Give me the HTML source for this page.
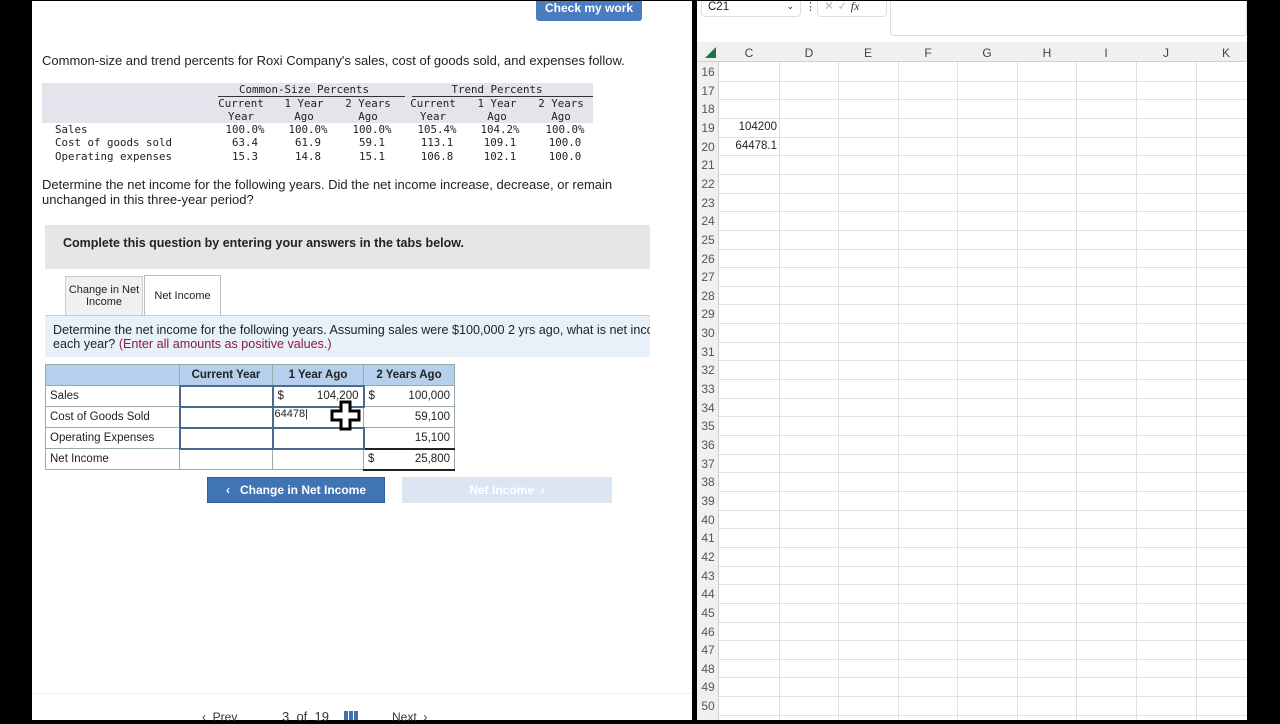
<!DOCTYPE html>
<html><head><meta charset="utf-8"><style>
*{margin:0;padding:0;box-sizing:border-box}
body{width:1280px;height:720px;overflow:hidden;background:#000;position:relative;font-family:"Liberation Sans",Arial,sans-serif;color:#222}
.a{position:absolute}
#left{left:32px;top:0;width:660px;height:720px;background:#fff}
.mono{font-family:"DejaVu Sans Mono","Liberation Mono",monospace;font-size:10.8px;color:#222}
.r{text-align:right}.c{text-align:center}
table.ans{border-collapse:collapse;font-size:11.5px}
table.ans td{border:1px solid #9aa;height:21px;padding:0 4px}
#xl{left:697px;top:0;width:550px;height:720px;background:#fff}
.rh{position:absolute;left:0;width:22px;font-size:12px;color:#555;text-align:center}
.hl{position:absolute;left:22px;right:0;height:1px;background:#e0e0e0}
.vl{position:absolute;top:62px;bottom:0;width:1px;background:#e0e0e0}
.ch{position:absolute;top:46px;font-size:12px;color:#444;text-align:center;width:60px}
</style></head><body>
<div id="left" class="a">
 <div class="a" style="left:504px;top:0;width:106px;height:21px;background:#4a7cc0;border-radius:0 0 3px 3px;color:#fff;font-weight:bold;font-size:12px;text-align:center;line-height:17px">Check my work</div>
 <div class="a" style="left:10px;top:53px;font-size:13px">Common-size and trend percents for Roxi Company's sales, cost of goods sold, and expenses follow.</div>
 <div class="a" style="left:10px;top:83px;width:551px;height:40px;background:#e4e4ec"></div>
 <div class="a mono" style="left:10px;top:83px;width:551px;height:80px;line-height:13.3px">
  <div class="a c" style="left:167px;width:190px;top:0">Common-Size Percents</div>
  <div class="a c" style="left:360px;width:190px;top:0">Trend Percents</div>
  <div class="a" style="left:176px;width:187px;top:13px;height:1px;background:#333"></div>
  <div class="a" style="left:370px;width:181px;top:13px;height:1px;background:#333"></div>
  <div class="a c" style="left:169px;width:60px;top:14px">Current<br>Year</div>
  <div class="a c" style="left:232px;width:60px;top:14px">1 Year<br>Ago</div>
  <div class="a c" style="left:296px;width:60px;top:14px">2 Years<br>Ago</div>
  <div class="a c" style="left:361px;width:60px;top:14px">Current<br>Year</div>
  <div class="a c" style="left:425px;width:60px;top:14px">1 Year<br>Ago</div>
  <div class="a c" style="left:489px;width:60px;top:14px">2 Years<br>Ago</div>
  <div class="a" style="left:13px;top:40px">Sales<br>Cost of goods sold<br>Operating expenses</div>
  <div class="a c" style="left:173px;width:60px;top:40px">100.0%<br>63.4<br>15.3</div>
  <div class="a c" style="left:236px;width:60px;top:40px">100.0%<br>61.9<br>14.8</div>
  <div class="a c" style="left:300px;width:60px;top:40px">100.0%<br>59.1<br>15.1</div>
  <div class="a c" style="left:365px;width:60px;top:40px">105.4%<br>113.1<br>106.8</div>
  <div class="a c" style="left:428px;width:60px;top:40px">104.2%<br>109.1<br>102.1</div>
  <div class="a c" style="left:493px;width:60px;top:40px">100.0%<br>100.0<br>100.0</div>
 </div>
 <div class="a" style="left:10px;top:177px;width:600px;font-size:13px;line-height:15px">Determine the net income for the following years. Did the net income increase, decrease, or remain unchanged in this three-year period?</div>
 <div class="a" style="left:13px;top:225px;width:605px;height:44px;background:#e6e6e6;font-weight:bold;font-size:12.5px;padding:11px 0 0 18px">Complete this question by entering your answers in the tabs below.</div>
 <div class="a c" style="left:33px;top:276px;width:78px;height:39px;background:#f0f0f0;border:1px solid #ccc;border-bottom:none;font-size:11px;line-height:12px;padding-top:7px">Change in Net<br>Income</div>
 <div class="a c" style="left:112px;top:275px;width:77px;height:41px;background:#fff;border:1px solid #bbb;border-bottom:none;font-size:11px;padding-top:14px">Net Income</div>
 <div class="a" style="left:13px;top:315px;width:605px;height:42px;background:#e8f1fa;border-top:1px solid #ccc;font-size:12.6px;line-height:13.5px;padding:8px 0 0 8px;white-space:nowrap;overflow:hidden">Determine the net income for the following years. Assuming sales were $100,000 2 yrs ago, what is net income for<br>each year? <span style="color:#8b1a3a">(Enter all amounts as positive values.)</span></div>
 <table class="ans a" style="left:13px;top:364px;width:410px">
  <tr style="background:#b5cfec;font-weight:bold;text-align:center"><td style="width:134px;height:20px"></td><td style="width:93px">Current Year</td><td style="width:91px">1 Year Ago</td><td style="width:91px">2 Years Ago</td></tr>
  <tr><td>Sales</td><td style="border:2px solid #4a6a90"></td><td style="border:2px solid #4a6a90">$<span style="float:right">104,200</span></td><td>$<span style="float:right">100,000</span></td></tr>
  <tr><td>Cost of Goods Sold</td><td style="border:2px solid #4a6a90"></td><td style="padding:0 1px;vertical-align:top;font-size:11px">64478|</td><td class="r">59,100</td></tr>
  <tr><td>Operating Expenses</td><td style="border:2px solid #4a6a90"></td><td style="border:2px solid #4a6a90"></td><td class="r">15,100</td></tr>
  <tr><td>Net Income</td><td style="border-top:2px solid #222"></td><td style="border-top:2px solid #222"></td><td style="border-top:2px solid #222;border-bottom:2px solid #222">$<span style="float:right">25,800</span></td></tr>
 </table>
 <svg class="a" style="left:298px;top:400px" width="32" height="32" viewBox="0 0 32 32"><path d="M11 2h9v9h9v9h-9v9h-9v-9H2v-9h9z" fill="#fff" stroke="#000" stroke-width="3"/></svg>
 <div class="a c" style="left:175px;top:477px;width:178px;height:26px;background:#3f74b5;border:1px solid #2e5f9c;color:#fff;font-weight:bold;font-size:12px;line-height:24px">‹&nbsp;&nbsp; Change in Net Income</div>
 <div class="a c" style="left:370px;top:477px;width:210px;height:26px;background:#dde5f2;color:#fff;font-weight:bold;font-size:12px;line-height:26px">Net Income &nbsp;›</div>
 <div class="a" style="left:0;top:693px;width:660px;height:1px;background:#eee"></div>
 <div class="a" style="left:170px;top:710px;font-size:12px;color:#333">‹ &nbsp;Prev</div>
 <div class="a" style="left:250px;top:709px;font-size:13px;color:#333">3 &nbsp;of &nbsp;19</div>
 <div class="a" style="left:312px;top:711px;width:15px;height:9px;background:repeating-linear-gradient(90deg,#3f6fb0 0 4px,#fff 4px 5px)"></div>
 <div class="a" style="left:360px;top:710px;font-size:12px;color:#333">Next &nbsp;›</div>
</div>
<div id="xl" class="a">
 <div class="a" style="left:0;top:0;width:550px;height:42px;background:#fff"></div>
 <div class="a" style="left:4px;top:-2px;width:100px;height:19px;background:#fff;border:1px solid #ddd;border-radius:4px;font-size:11.5px;padding:2px 6px">C21<span style="float:right;font-size:9px">⌄</span></div>
 <div class="a" style="left:108px;top:0;font-size:11px;color:#444">⋮</div>
 <div class="a" style="left:120px;top:-2px;width:70px;height:19px;background:#fff;border:1px solid #ddd;border-radius:4px;font-size:12px;color:#bbb;padding:0 6px">✕ ✓ <i style="color:#333;font-family:'Liberation Serif',serif">fx</i></div>
 <div class="a" style="left:193px;top:-2px;width:357px;height:38px;background:#fff;border:1px solid #ddd;border-radius:4px"></div>
 <div class="a" style="left:0;top:42px;width:550px;height:20px;background:#f0f0f0;border-bottom:1px solid #d0d0d0"></div>
 <svg class="a" style="left:8px;top:47px" width="11" height="11"><path d="M11 0V11H0z" fill="#217346"/></svg>
 <div class="ch" style="left:22px">C</div><div class="ch" style="left:82px">D</div><div class="ch" style="left:141px">E</div><div class="ch" style="left:201px">F</div><div class="ch" style="left:260px">G</div><div class="ch" style="left:320px">H</div><div class="ch" style="left:379px">I</div><div class="ch" style="left:439px">J</div><div class="ch" style="left:499px">K</div>
 <div class="a" style="left:0;top:62px;width:22px;height:658px;background:#f0f0f0;border-right:1px solid #d0d0d0"></div>
 <div class="vl" style="left:82px"></div><div class="vl" style="left:141px"></div><div class="vl" style="left:201px"></div><div class="vl" style="left:260px"></div><div class="vl" style="left:320px"></div><div class="vl" style="left:379px"></div><div class="vl" style="left:439px"></div><div class="vl" style="left:499px"></div>
 <div id="rows"></div>
 <div class="a" style="left:22px;top:121px;width:58px;font-size:11.5px;text-align:right">104200</div>
 <div class="a" style="left:22px;top:140px;width:58px;font-size:11.5px;text-align:right">64478.1</div>
</div>
<div class="a" style="left:0;top:0;width:1280px;height:1px;background:#000"></div>
<script>
var h='';for(var n=16;n<=50;n++){var t=62+(n-16)*18.65;h+='<div class="rh" style="top:'+(t+3)+'px">'+n+'</div><div class="hl" style="top:'+(t+18.65)+'px"></div>';}
document.getElementById('rows').innerHTML=h;
</script>
</body></html>
